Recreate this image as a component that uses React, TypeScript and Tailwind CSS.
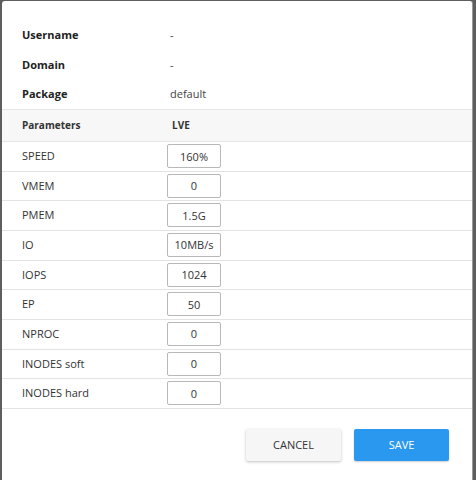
const info = [
  { label: 'Username', value: '-' },
  { label: 'Domain', value: '-' },
  { label: 'Package', value: 'default' },
];

const limits = [
  { name: 'SPEED', value: '160%' },
  { name: 'VMEM', value: '0' },
  { name: 'PMEM', value: '1.5G' },
  { name: 'IO', value: '10MB/s' },
  { name: 'IOPS', value: '1024' },
  { name: 'EP', value: '50' },
  { name: 'NPROC', value: '0' },
  { name: 'INODES soft', value: '0' },
  { name: 'INODES hard', value: '0' },
];

export default function App() {
  return (
    <div className="h-[480px] w-[476px] overflow-hidden bg-[#5e5e5e] pl-[2px] pr-[3px] pt-[1px] font-['Open_Sans',sans-serif] text-[11px] text-[#333]">
      <div className="flex h-[479px] flex-col rounded-t-[3px] border-r border-[#9a9a9a] bg-white">
        <div className="pt-[19.5px]">
          {info.map((row) => (
            <div key={row.label} className="grid h-[29.5px] grid-cols-[148px_1fr] items-center px-5">
              <span className="font-bold text-[#222]">{row.label}</span>
              <span className="text-[#444]">{row.value}</span>
            </div>
          ))}
        </div>

        <div className="grid h-[33px] grid-cols-[150px_1fr] items-center border-y border-[#e6e6e6] bg-[#f7f7f7] px-5 text-[10px] font-bold text-[#333]">
          <span>Parameters</span>
          <span>LVE</span>
        </div>

        {limits.map((row) => (
          <div key={row.name} className="grid h-[29.67px] grid-cols-[145px_1fr] items-start border-b border-[#e3e3e3] px-5 pt-[2px]">
            <span className="leading-[24px] text-[#333]">{row.name}</span>
            <input
              readOnly
              value={row.value}
              className="h-6 w-[54px] rounded-[2px] border-[1.5px] border-[#b8b8b8] bg-white text-center text-[11px] text-[#333] outline-none"
            />
          </div>
        ))}

        <div className="flex justify-end gap-[13px] pr-[23px] pt-[20px]">
          <button className="h-8 w-[95px] rounded-[2px] bg-[#f6f6f6] text-[11px] text-[#333] shadow-[0_1px_3px_rgba(0,0,0,0.25)]">
            CANCEL
          </button>
          <button className="h-8 w-[95px] rounded-[2px] bg-[#2b98ef] text-[11px] text-white shadow-[0_1px_2px_rgba(0,0,0,0.2)]">
            SAVE
          </button>
        </div>
      </div>
    </div>
  );
}
